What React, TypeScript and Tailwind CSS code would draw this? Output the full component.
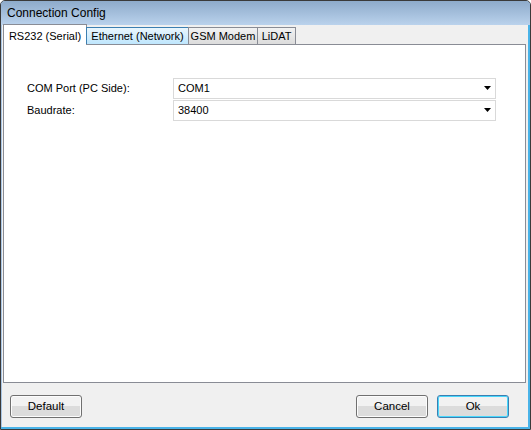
import React from "react";

const font = { fontFamily: '"Liberation Sans", Arial, sans-serif' };

const tabs = [
  { label: "RS232 (Serial)", active: true, w: "w-[84px]" },
  { label: "Ethernet (Network)", hover: true, w: "w-[103px]" },
  { label: "GSM Modem", w: "w-[70px]" },
  { label: "LiDAT", w: "w-[39px]" },
];

const ComboBox = ({ value }: { value: string }) => (
  <div className="flex h-[21px] w-[323px] items-center justify-between border border-[#d9d9d9] bg-white pr-[3px] pl-[4px]">
    <span className="text-[11px] text-black">{value}</span>
    <svg width="8" height="5" viewBox="0 0 8 5">
      <path d="M0 0 H7 L3.5 4 Z" fill="#000" />
    </svg>
  </div>
);

const Button = ({ label, primary }: { label: string; primary?: boolean }) => (
  <button
    className={`h-[23px] w-[72px] rounded-[3px] border bg-gradient-to-b from-[#f2f2f2] from-50% to-[#dcdcdc] to-50% text-[11.5px] text-black ${
      primary
        ? "border-[#3c7fb1] shadow-[inset_0_0_0_1px_#48d7fc]"
        : "border-[#707070] shadow-[inset_0_0_0_1px_#fcfcfc]"
    }`}
  >
    {label}
  </button>
);

export default function App() {
  return (
    <div
      style={font}
      className="flex h-[430px] w-[531px] flex-col overflow-hidden rounded-t-[5px] border border-[#3a3a3a] bg-[#a9c6e4]"
    >
      {/* Title bar */}
      <div className="flex h-[24px] shrink-0 items-center bg-gradient-to-b from-[#8eabcb] to-[#bad2ec] pl-[6px]">
        <span className="text-[12px] text-black">Connection Config</span>
      </div>

      <div className="flex flex-1 border-r-2 border-b-2 border-r-[#49b3e8] border-b-[#49b3e8] pl-[1px]">
        <div className="flex flex-1 flex-col bg-[#f0f0f0] pr-[2px] pl-[1px]">
          {/* Tabs */}
          <div className="relative z-10 flex h-[19px] shrink-0 items-end">
            {tabs.map((t) =>
              t.active ? (
                <div
                  key={t.label}
                  className={`${t.w} -mb-px flex h-[21px] items-start justify-center border border-b-0 border-[#898c95] bg-white pt-[3px] text-[11px] whitespace-nowrap text-black`}
                >
                  {t.label}
                </div>
              ) : (
                <div
                  key={t.label}
                  className={`${t.w} -ml-px flex h-[17px] items-center justify-center border border-b-0 text-[11px] whitespace-nowrap text-black ${
                    t.hover
                      ? "border-[#3c7fb1] bg-gradient-to-b from-[#eaf6fd] to-[#bee6fd]"
                      : "border-[#898c95] bg-gradient-to-b from-[#f2f2f2] to-[#dcdcdc]"
                  }`}
                >
                  {t.label}
                </div>
              )
            )}
          </div>

          {/* Panel */}
          <div className="flex h-[339px] shrink-0 flex-col gap-[1px] border border-[#898c95] bg-white pt-[33px] pl-[23px]">
            <div className="flex items-center">
              <span className="w-[146px] text-[11px] text-black">COM Port (PC Side):</span>
              <ComboBox value="COM1" />
            </div>
            <div className="flex items-center">
              <span className="w-[146px] text-[11px] text-black">Baudrate:</span>
              <ComboBox value="38400" />
            </div>
          </div>

          {/* Footer */}
          <div className="flex flex-1 items-start justify-between pt-[12px] pr-[17px] pl-[7px]">
            <Button label="Default" />
            <div className="flex gap-[9px]">
              <Button label="Cancel" />
              <Button label="Ok" primary />
            </div>
          </div>
        </div>
      </div>
    </div>
  );
}
